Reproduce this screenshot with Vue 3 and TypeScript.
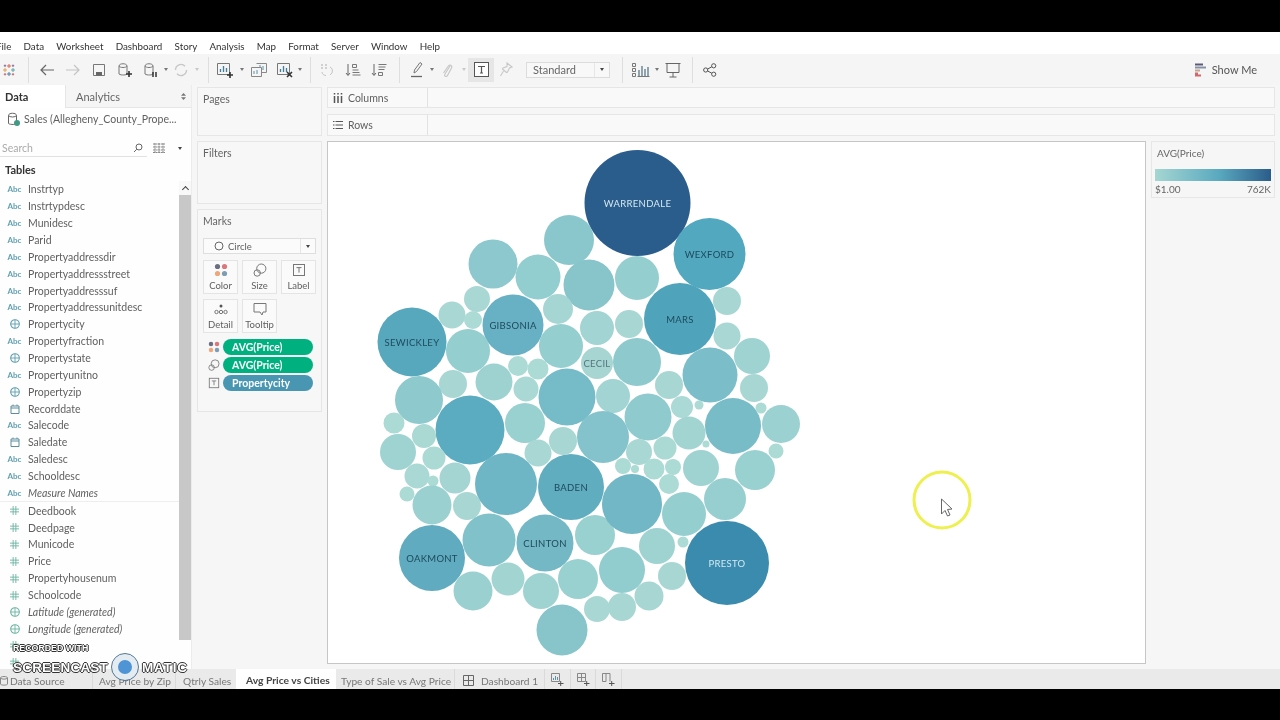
<script setup lang="ts">
type FieldKind = 'abc' | 'globe' | 'date' | 'num'

interface Field {
  name: string
  kind: FieldKind
  italic?: boolean
  measure?: boolean
}

interface Bubble {
  x: number
  y: number
  r: number
  color?: string
  label?: string
  ink?: string
}

const menus = ['File', 'Data', 'Worksheet', 'Dashboard', 'Story', 'Analysis', 'Map', 'Format', 'Server', 'Window', 'Help']

const dimensions: Field[] = [
  { name: 'Instrtyp', kind: 'abc' },
  { name: 'Instrtypdesc', kind: 'abc' },
  { name: 'Munidesc', kind: 'abc' },
  { name: 'Parid', kind: 'abc' },
  { name: 'Propertyaddressdir', kind: 'abc' },
  { name: 'Propertyaddressstreet', kind: 'abc' },
  { name: 'Propertyaddresssuf', kind: 'abc' },
  { name: 'Propertyaddressunitdesc', kind: 'abc' },
  { name: 'Propertycity', kind: 'globe' },
  { name: 'Propertyfraction', kind: 'abc' },
  { name: 'Propertystate', kind: 'globe' },
  { name: 'Propertyunitno', kind: 'abc' },
  { name: 'Propertyzip', kind: 'globe' },
  { name: 'Recorddate', kind: 'date' },
  { name: 'Salecode', kind: 'abc' },
  { name: 'Saledate', kind: 'date' },
  { name: 'Saledesc', kind: 'abc' },
  { name: 'Schooldesc', kind: 'abc' },
  { name: 'Measure Names', kind: 'abc', italic: true },
]

const measures: Field[] = [
  { name: 'Deedbook', kind: 'num', measure: true },
  { name: 'Deedpage', kind: 'num', measure: true },
  { name: 'Municode', kind: 'num', measure: true },
  { name: 'Price', kind: 'num', measure: true },
  { name: 'Propertyhousenum', kind: 'num', measure: true },
  { name: 'Schoolcode', kind: 'num', measure: true },
  { name: 'Latitude (generated)', kind: 'globe', italic: true, measure: true },
  { name: 'Longitude (generated)', kind: 'globe', italic: true, measure: true },
  { name: '', kind: 'num', measure: true },
  { name: '', kind: 'num', measure: true },
]

const DARK_INK = '#1d4a5c'
const LIGHT_INK = '#d4e9f0'

const bubbles: Bubble[] = [
  { x: 637.5, y: 203, r: 53, color: '#2b5d8c', label: 'WARRENDALE', ink: LIGHT_INK },
  { x: 709.5, y: 254, r: 36, color: '#52a8bf', label: 'WEXFORD', ink: DARK_INK },
  { x: 680, y: 319, r: 36, color: '#4fa4bb', label: 'MARS', ink: DARK_INK },
  { x: 412, y: 342, r: 34.5, color: '#58a8bd', label: 'SEWICKLEY', ink: DARK_INK },
  { x: 513, y: 325, r: 30.5, color: '#68b0c3', label: 'GIBSONIA', ink: DARK_INK },
  { x: 597, y: 363, r: 16, color: '#a6d5d2', label: 'CECIL', ink: '#54777f' },
  { x: 571, y: 487, r: 33, color: '#60adc0', label: 'BADEN', ink: DARK_INK },
  { x: 545, y: 543, r: 28.5, color: '#74b8c6', label: 'CLINTON', ink: DARK_INK },
  { x: 432, y: 558, r: 33, color: '#60abbf', label: 'OAKMONT', ink: DARK_INK },
  { x: 727, y: 563, r: 42, color: '#3a8bae', label: 'PRESTO', ink: LIGHT_INK },
  { x: 569, y: 240, r: 25 },
  { x: 493, y: 264, r: 24.5 },
  { x: 538, y: 277, r: 22.5 },
  { x: 589, y: 285, r: 25.5 },
  { x: 637, y: 278, r: 22 },
  { x: 727, y: 301, r: 14 },
  { x: 477, y: 299, r: 13 },
  { x: 452, y: 315, r: 13.5 },
  { x: 473, y: 320, r: 9 },
  { x: 558, y: 309, r: 15 },
  { x: 597, y: 328, r: 17 },
  { x: 629, y: 324, r: 14 },
  { x: 727, y: 336, r: 13.5 },
  { x: 752, y: 356, r: 18 },
  { x: 468, y: 351, r: 22 },
  { x: 561, y: 346, r: 22 },
  { x: 637, y: 362, r: 24 },
  { x: 710, y: 375, r: 27.5 },
  { x: 518, y: 366, r: 10 },
  { x: 538, y: 369, r: 10.5 },
  { x: 453, y: 384, r: 14 },
  { x: 494, y: 382, r: 18.5 },
  { x: 669, y: 385, r: 14 },
  { x: 754, y: 388, r: 14 },
  { x: 526, y: 389, r: 12.5 },
  { x: 419, y: 400, r: 24 },
  { x: 567, y: 397, r: 28.5 },
  { x: 613, y: 396, r: 17 },
  { x: 470, y: 430, r: 34.5 },
  { x: 394, y: 423, r: 10.5 },
  { x: 424, y: 436, r: 12 },
  { x: 398, y: 452, r: 18 },
  { x: 525, y: 423, r: 20 },
  { x: 563, y: 441, r: 14 },
  { x: 538, y: 453, r: 13.5 },
  { x: 434, y: 458, r: 11.5 },
  { x: 417, y: 476, r: 12.5 },
  { x: 433, y: 481, r: 5.5 },
  { x: 455, y: 478, r: 15.5 },
  { x: 407, y: 494, r: 7.5 },
  { x: 432, y: 505, r: 19.5 },
  { x: 467, y: 506, r: 14 },
  { x: 506, y: 484, r: 31 },
  { x: 489, y: 540, r: 26.5 },
  { x: 508, y: 579, r: 16.5 },
  { x: 473, y: 591, r: 19.5 },
  { x: 541, y: 591, r: 18 },
  { x: 578, y: 579, r: 20 },
  { x: 562, y: 630, r: 25.5 },
  { x: 595, y: 535, r: 20 },
  { x: 597, y: 609, r: 13 },
  { x: 648, y: 417, r: 23.5 },
  { x: 682, y: 407, r: 11 },
  { x: 699, y: 405, r: 4.5 },
  { x: 733, y: 426, r: 28 },
  { x: 781, y: 424, r: 19 },
  { x: 761, y: 408, r: 5.5 },
  { x: 603, y: 437, r: 26 },
  { x: 689, y: 433, r: 16.5 },
  { x: 639, y: 452, r: 13 },
  { x: 665, y: 448, r: 11.5 },
  { x: 706, y: 444, r: 3.5 },
  { x: 776, y: 451, r: 7.5 },
  { x: 623, y: 466, r: 8 },
  { x: 635, y: 469, r: 4 },
  { x: 654, y: 469, r: 10.5 },
  { x: 673, y: 467, r: 8 },
  { x: 701, y: 468, r: 18 },
  { x: 755, y: 470, r: 20 },
  { x: 669, y: 484, r: 10 },
  { x: 632, y: 504, r: 30 },
  { x: 684, y: 514, r: 22 },
  { x: 725, y: 499, r: 21 },
  { x: 657, y: 546, r: 18 },
  { x: 683, y: 542, r: 5.5 },
  { x: 672, y: 576, r: 14 },
  { x: 622, y: 570, r: 23 },
  { x: 649, y: 596, r: 14.5 },
  { x: 622, y: 607, r: 14 },
]

// the sizes and colours both encode AVG(Price), so unlabelled marks get their fill from r
const ramp: [number, number[]][] = [
  [10, [172, 218, 213]],
  [14, [168, 215, 211]],
  [22, [148, 206, 207]],
  [25, [138, 199, 204]],
  [28, [120, 188, 200]],
  [31, [110, 181, 197]],
  [35, [88, 171, 191]],
]

function fillFor(b: Bubble): string {
  if (b.color) return b.color
  const r = Math.min(35, Math.max(10, b.r))
  let i = 0
  while (i < ramp.length - 2 && r > ramp[i + 1][0]) i++
  const [r0, c0] = ramp[i]
  const [r1, c1] = ramp[i + 1]
  const t = (r - r0) / (r1 - r0)
  const mix = c0.map((c, n) => Math.round(c + (c1[n] - c) * t))
  return `rgb(${mix.join(',')})`
}
</script>

<template>
  <div class="frame">
    <svg class="sprites" width="0" height="0" aria-hidden="true">
      <symbol id="i-color" viewBox="0 0 14 14">
        <circle cx="3.5" cy="3.5" r="2.6" fill="#6a6f80" />
        <circle cx="10.5" cy="3.5" r="2.6" fill="#d9777a" />
        <circle cx="3.5" cy="10.5" r="2.6" fill="#efa67c" />
        <circle cx="10.5" cy="10.5" r="2.6" fill="#7d9db4" />
      </symbol>
      <symbol id="i-size" viewBox="0 0 14 14">
        <circle cx="8.3" cy="5.6" r="4.6" fill="none" stroke="#777" />
        <circle cx="4.2" cy="10" r="3.2" fill="none" stroke="#777" />
      </symbol>
      <symbol id="i-label" viewBox="0 0 14 14">
        <rect x="1.5" y="1.5" width="11" height="11" fill="none" stroke="#777" />
        <path d="M4.5 4.6h5M7 4.6v5" fill="none" stroke="#777" />
      </symbol>
    </svg>

    <div class="black-bar top"></div>

    <nav class="menu">
      <span v-for="m in menus" :key="m">{{ m }}</span>
    </nav>

    <div class="toolbar">
      <svg class="logo" width="14" height="14" viewBox="0 0 14 14">
        <path d="M7 1v4M5 3h4" stroke="#d9694f" />
        <path d="M7 9v4M5 11h4" stroke="#4f7fa6" />
        <path d="M3 5v4M1 7h4" stroke="#e3a04f" />
        <path d="M11 5v4M9 7h4" stroke="#5aa7a0" />
        <path d="M3 1.5v2.5M1.8 2.7h2.4M11 1.5v2.5M9.8 2.7h2.4" stroke="#8a6fa0" />
        <path d="M3 10v2.5M1.8 11.3h2.4M11 10v2.5M9.8 11.3h2.4" stroke="#c66a7a" />
      </svg>

      <div class="group g1">
        <span class="tool">
          <svg width="16" height="14" viewBox="0 0 16 14"><path d="M15 7H2M7 2 2 7l5 5" fill="none" stroke="#666" stroke-width="1.2" /></svg>
        </span>
        <span class="tool">
          <svg width="16" height="14" viewBox="0 0 16 14"><path d="M1 7h13M9 2l5 5-5 5" fill="none" stroke="#c4c4c4" stroke-width="1.2" /></svg>
        </span>
        <span class="tool">
          <svg width="14" height="14" viewBox="0 0 14 14"><path d="M1.5 1.5h11v11h-11z" fill="none" stroke="#777" /><path d="M4 9h6v3.5H4z" fill="#666" /></svg>
        </span>
        <span class="tool">
          <svg width="16" height="16" viewBox="0 0 16 16"><path d="M2 4c0-3 8-3 8 0v8c0 1-6 1.6-8 0zM2 4c1 2 7 2 8 0" fill="none" stroke="#777" /><path d="M9 12h6M12 9v6" stroke="#333" stroke-width="1.6" /></svg>
        </span>
        <span class="tool">
          <svg width="16" height="16" viewBox="0 0 16 16"><path d="M2 4c0-3 8-3 8 0v8c0 1-6 1.6-8 0zM2 4c1 2 7 2 8 0" fill="none" stroke="#777" /><path d="M10 10v5M13 10v5" stroke="#333" stroke-width="1.5" /></svg>
        </span>
        <i class="caret c4"></i>
        <span class="tool">
          <svg width="16" height="16" viewBox="0 0 16 16"><path d="M2.5 8a5.5 5.5 0 0 1 9.5-3.8M13.5 8A5.5 5.5 0 0 1 4 11.8" fill="none" stroke="#c6c6c6" stroke-width="1.3" /></svg>
        </span>
        <i class="caret c6 off"></i>
      </div>

      <div class="group g2">
        <span class="tool">
          <svg width="18" height="16" viewBox="0 0 18 16"><path d="M1.5 1.5h12v11h-12z" fill="none" stroke="#777" /><path d="M4.5 10V7M7.5 10V4M10.5 10V6" stroke="#3f7f98" stroke-width="1.3" /><path d="M11 13h6M14 10v6" stroke="#333" stroke-width="1.6" /></svg>
        </span>
        <i class="caret c8"></i>
        <span class="tool">
          <svg width="18" height="16" viewBox="0 0 18 16"><path d="M1.5 5.5h10v9h-10z" fill="none" stroke="#888" /><path d="M6.5 1.5h10v9h-5" fill="none" stroke="#888" /><path d="M4 12V9M7 12V8M10 5V3M13 8V4" stroke="#5b93a8" /></svg>
        </span>
        <span class="tool">
          <svg width="18" height="16" viewBox="0 0 18 16"><path d="M1.5 1.5h12v11h-12z" fill="none" stroke="#777" /><path d="M4.5 10V7M7.5 10V4M10.5 10V6" stroke="#3f7f98" stroke-width="1.3" /><path d="m11 10 5 5M16 10l-5 5" stroke="#333" stroke-width="1.6" /></svg>
        </span>
        <i class="caret c2"></i>
      </div>

      <div class="group g3">
        <span class="tool">
          <svg width="16" height="16" viewBox="0 0 16 16"><path d="M2 3h2M6 3h2M2 6h2M6 6h2" stroke="#c4c4c4" stroke-width="1.4" /><path d="M11 5c2 1 3 3 2 6l-2 2M3 10c0 2 2 3.5 4 3.5" fill="none" stroke="#c4c4c4" /></svg>
        </span>
        <span class="tool">
          <svg width="16" height="16" viewBox="0 0 16 16"><path d="M3 2v11M1 11l2 2.5L5 11" fill="none" stroke="#666" /><path d="M7.5 2.5h4v3h-4zM7.5 8h6M7.5 10.5h7M7.5 13h8" fill="none" stroke="#777" /></svg>
        </span>
        <span class="tool">
          <svg width="16" height="16" viewBox="0 0 16 16"><path d="M3 2v11M1 11l2 2.5L5 11" fill="none" stroke="#666" /><path d="M7.5 2.5h8M7.5 5h7M7.5 7.5h6M7.5 10.5h4v3h-4z" fill="none" stroke="#777" /></svg>
        </span>
      </div>

      <div class="group g4">
        <span class="tool">
          <svg width="14" height="17" viewBox="0 0 14 17"><path d="m4 12 .5-3L10 1.5l2 1.5-5.5 7.5z" fill="none" stroke="#777" /><path d="M1 15.5h11" stroke="#666" stroke-width="1.3" /></svg>
        </span>
        <i class="caret c4"></i>
        <span class="tool">
          <svg width="12" height="16" viewBox="0 0 12 16"><path d="M9 4 4 12c-1.5 2 1.5 3.5 2.5 1.5L10.5 6c1-2.5-2-4-3.5-1.5L2.5 11" fill="none" stroke="#c8c8c8" stroke-width="1.2" /></svg>
        </span>
        <i class="caret c8 off"></i>
        <span class="tool active">
          <svg width="15" height="15" viewBox="0 0 15 15"><rect x=".5" y=".5" width="14" height="14" fill="#fdfdfd" stroke="#555" /><path d="M4 4.5h7M7.5 4.5V11M6 11h3" fill="none" stroke="#555" stroke-width="1.2" /></svg>
        </span>
        <span class="tool narrow">
          <svg width="14" height="16" viewBox="0 0 14 16"><path d="m8 1 5 4-2.5 1-2 4-1 .5-4-3.5.5-1 4-1.5zM4.500 9 1.500 14" fill="none" stroke="#c8c8c8" stroke-width="1.1" /></svg>
        </span>
        <div class="fit-select">
          <span>Standard</span>
          <b><i class="caret c4 dark"></i></b>
        </div>
      </div>

      <div class="group g5">
        <span class="tool">
          <svg width="18" height="14" viewBox="0 0 18 14"><path d="M.5.5h3v3h-3zM.5 5.5h3v3h-3zM.5 10.5h3v3h-3z" fill="none" stroke="#777" /><path d="M5.5 13.5h12" stroke="#777" /><path d="M7 13V7M10 13V3M13 13V6M16 13V4" stroke="#4d6e80" stroke-width="1.2" /></svg>
        </span>
        <i class="caret c6"></i>
        <span class="tool">
          <svg width="16" height="16" viewBox="0 0 16 16"><path d="M.5 1.5h15M2 1.5v9h12v-9" fill="none" stroke="#666" /><path d="M8 10.5V15M4.500 15h7" stroke="#666" /></svg>
        </span>
      </div>

      <span class="tool share">
        <svg width="14" height="14" viewBox="0 0 14 14"><circle cx="2.7" cy="7" r="2.1" fill="none" stroke="#555" /><circle cx="10.7" cy="2.8" r="2.1" fill="none" stroke="#555" /><circle cx="10.7" cy="11.2" r="2.1" fill="none" stroke="#555" /><path d="m4.600 6 4.200-2.200M4.600 8l4.200 2.200" stroke="#555" /></svg>
      </span>

      <div class="show-me">
        <svg width="11" height="14" viewBox="0 0 11 14">
          <path d="M0 1.5h8" stroke="#5d5a78" stroke-width="2" />
          <path d="M0 4.5h11" stroke="#8792a6" stroke-width="2" />
          <path d="M0 7.5h5" stroke="#c9a48c" stroke-width="2" />
          <path d="M0 10.500h3M0 12.500h6" stroke="#d3686a" stroke-width="2" />
        </svg>
        <span>Show Me</span>
      </div>
    </div>

    <div class="workspace">
      <aside class="sidebar">
        <div class="side-tabs">
          <span class="side-tab on">Data</span>
          <span class="side-tab">Analytics<i class="updown"></i></span>
        </div>
        <div class="source">
          <svg width="14" height="15" viewBox="0 0 14 15"><path d="M1.5 3.5c0-3 8-3 8 0v8c0 1-6 1.5-8 0zM1.5 3.5c1 2 7 2 8 0" fill="none" stroke="#666" /><circle cx="10" cy="11" r="3" fill="#3f9a86" /></svg>
          <span>Sales (Allegheny_County_Prope...</span>
        </div>
        <div class="search-row">
          <div class="search">
            <span>Search</span>
            <svg width="10" height="10" viewBox="0 0 10 10"><circle cx="6" cy="4" r="3" fill="none" stroke="#666" /><path d="M3.8 6.2 1 9" stroke="#666" /></svg>
          </div>
          <svg class="view-icon" width="12" height="10" viewBox="0 0 12 10"><path d="M0 1h12M0 4h12M0 7h12M0 9.500h12M2 0v10M6 0v10M10 0v10" stroke="#888" stroke-dasharray="2 .6" /></svg>
          <i class="caret c4 dark menu-caret"></i>
        </div>
        <h4 class="tables">Tables</h4>
        <div class="field-area">
          <div class="fields">
            <div
              v-for="f in [...dimensions, ...measures]"
              :key="f.name + f.kind + f.measure"
              class="field"
              :class="{ italic: f.italic, first: f.name === 'Deedbook' }"
            >
              <span class="field-icon" :class="{ green: f.measure }">
                <template v-if="f.kind === 'abc'">Abc</template>
                <svg v-else-if="f.kind === 'globe'" width="10" height="10" viewBox="0 0 10 10">
                  <circle cx="5" cy="5" r="4.3" fill="none" stroke="currentColor" stroke-width="1.1" />
                  <path d="M.7 5h8.6M5 .7v8.6" stroke="currentColor" stroke-width=".9" />
                </svg>
                <svg v-else-if="f.kind === 'date'" width="10" height="10" viewBox="0 0 10 10">
                  <path d="M1 2h8v7.5H1zM1 4h8M3 .5V2M7 .5V2" fill="none" stroke="#5d8d9c" />
                </svg>
                <svg v-else width="9" height="9" viewBox="0 0 10 10">
                  <path d="M3.5 0v10M6.5 0v10M0 3.5h10M0 6.5h10" stroke="currentColor" />
                </svg>
              </span>
              <span>{{ f.name }}</span>
            </div>
          </div>
          <div class="scrollbar">
            <div class="scroll-up"><i class="chev"></i></div>
            <div class="scroll-thumb"></div>
          </div>
        </div>
      </aside>

      <section class="cards">
        <div class="card pages"><h5>Pages</h5></div>
        <div class="card filters"><h5>Filters</h5></div>
        <div class="card marks">
          <h5>Marks</h5>
          <div class="mark-type">
            <svg width="10" height="10" viewBox="0 0 10 10"><circle cx="5" cy="5" r="4" fill="none" stroke="#666" /></svg>
            <span>Circle</span>
            <b><i class="caret c4 dark"></i></b>
          </div>
          <div class="mark-grid">
            <div class="mark-btn"><svg width="14" height="14"><use href="#i-color" /></svg><span>Color</span></div>
            <div class="mark-btn"><svg width="14" height="14"><use href="#i-size" /></svg><span>Size</span></div>
            <div class="mark-btn"><svg width="14" height="14"><use href="#i-label" /></svg><span>Label</span></div>
            <div class="mark-btn">
              <svg width="14" height="14" viewBox="0 0 14 14"><circle cx="7" cy="4" r="1.5" fill="#555" /><circle cx="2.5" cy="10" r="1.7" fill="none" stroke="#777" /><circle cx="7" cy="10" r="1.7" fill="none" stroke="#777" /><circle cx="11.5" cy="10" r="1.7" fill="none" stroke="#777" /></svg>
              <span>Detail</span>
            </div>
            <div class="mark-btn">
              <svg width="14" height="14" viewBox="0 0 14 14"><path d="M1 1.5h12V10h-3l-1 3-2-3H1z" fill="none" stroke="#777" /></svg>
              <span>Tooltip</span>
            </div>
          </div>
          <div class="pill-row"><svg width="12" height="12"><use href="#i-color" /></svg><span class="pill">AVG(Price)</span></div>
          <div class="pill-row"><svg width="12" height="12"><use href="#i-size" /></svg><span class="pill">AVG(Price)</span></div>
          <div class="pill-row"><svg width="12" height="12"><use href="#i-label" /></svg><span class="pill blue">Propertycity</span></div>
        </div>
      </section>

      <section class="canvas-col">
        <div class="shelf columns">
          <div class="shelf-name">
            <svg width="10" height="10" viewBox="0 0 10 10"><path d="M1.5 3v7M5 3v7M8.5 3v7M1.5 0v1.5M5 0v1.5M8.500 0v1.5" stroke="#555" stroke-width="1.5" /></svg>
            Columns
          </div>
        </div>
        <div class="shelf rows">
          <div class="shelf-name">
            <svg width="10" height="10" viewBox="0 0 10 10"><path d="M2.5 1.5H10M2.5 5H10M2.5 8.5H10M0 1.5h1.500M0 5h1.500M0 8.500h1.500" stroke="#555" /></svg>
            Rows
          </div>
        </div>
        <div class="view-row">
          <div class="viz">
            <svg class="chart" viewBox="328 142 817 521" width="817" height="521">
              <g v-for="b in bubbles" :key="`${b.x}-${b.y}`">
                <circle :cx="b.x" :cy="b.y" :r="b.r" :fill="fillFor(b)" />
                <text v-if="b.label" :x="b.x" :y="b.y + 3.5" :fill="b.ink" text-anchor="middle">{{ b.label }}</text>
              </g>
              <circle class="halo" cx="942" cy="500" r="28" />
              <path class="pointer" d="M941.5 499v15l3.5-3.5 2.5 5.5 2.5-1-2.5-5.5 4.5-.5z" />
            </svg>
          </div>
          <div class="legend">
            <h5>AVG(Price)</h5>
            <div class="ramp"></div>
            <div class="legend-ends"><span>$1.00</span><span>762K</span></div>
          </div>
        </div>
      </section>
    </div>

    <div class="sheet-tabs">
      <span class="sheet source-tab">
        <svg width="9" height="10" viewBox="0 0 9 10"><path d="M.5 2c0-2 7-2 7 0v6c0 1.5-7 1.5-7 0zM.5 2c1 1.5 6 1.5 7 0" fill="none" stroke="#888" /></svg>
        Data Source
      </span>
      <span class="sheet zip">Avg Price by Zip</span>
      <span class="sheet qtr">Qtrly Sales</span>
      <span class="sheet current">Avg Price vs Cities</span>
      <span class="sheet type">Type of Sale vs Avg Price</span>
      <span class="sheet dash">
        <svg width="11" height="11" viewBox="0 0 11 11"><path d="M.5.5h10v10H.5zM.5 5.5h10M5.5.5v10" fill="none" stroke="#666" /></svg>
        Dashboard 1
      </span>
      <span class="sheet add">
        <svg width="14" height="14" viewBox="0 0 14 14"><path d="M1.5 1.5h8v8h-8z" fill="none" stroke="#888" /><path d="M3.5 8V6M5.5 8V4M7.5 8V5" stroke="#5b93a8" /><path d="M8 11.5h5.500M10.700 9v5" stroke="#555" /></svg>
      </span>
      <span class="sheet add">
        <svg width="14" height="14" viewBox="0 0 14 14"><path d="M1.5 1.5h8v8h-8zM1.5 5.5h8M5.5 1.5v8" fill="none" stroke="#888" /><path d="M8 11.5h5.500M10.700 9v5" stroke="#555" /></svg>
      </span>
      <span class="sheet add">
        <svg width="14" height="14" viewBox="0 0 14 14"><path d="M1.5 1.5H5v8H1.500zM5 1.5h4v8" fill="none" stroke="#888" /><path d="M8 11.5h5.500M10.700 9v5" stroke="#555" /></svg>
      </span>
    </div>

    <div class="black-bar bottom"></div>

    <div class="watermark">
      <div class="wm-top">RECORDED WITH</div>
      <div class="wm-main">
        <span class="wm-screen">SCREENCAST</span>
        <i class="wm-logo"></i>
        <span class="wm-matic">MATIC</span>
      </div>
    </div>
  </div>
</template>

<style>
html,
body {
  margin: 0;
  background: #000;
}
</style>

<style scoped>
.frame {
  position: relative;
  width: 1280px;
  height: 720px;
  overflow: hidden;
  display: flex;
  flex-direction: column;
  background: #f6f6f6;
  color: #5f5f5f;
  font-family: Lato, "Open Sans", sans-serif;
  font-size: 10.5px;
  filter: blur(0.5px);
}

.sprites {
  position: absolute;
}

.black-bar {
  background: #000;
  flex: none;
}

.black-bar.top {
  height: 32px;
}

.black-bar.bottom {
  height: 31px;
}

.menu {
  height: 22px;
  flex: none;
  display: flex;
  align-items: center;
  gap: 12.2px;
  margin-left: -4px;
  padding-top: 6px;
  box-sizing: border-box;
  background: #fff;
  color: #333;
  font-size: 9.8px;
}

.toolbar {
  height: 31px;
  flex: none;
  display: flex;
  align-items: center;
  background: #f5f5f5;
}

.logo {
  width: 14px;
  flex: none;
  margin: 0 12px 0 2px;
}

.group {
  display: flex;
  align-items: center;
  height: 26px;
  border-right: 1px solid #dedede;
}

.g1 { padding: 0 8px 0 5px; border-left: 1px solid #dedede; }
.g2 { padding: 0 10px 0 3px; }
.g3 { padding: 0 7px 0 3px; }
.g4 { padding: 0 12px 0 4px; }
.g5 { padding: 0 6px 0 5px; }

.tool {
  width: 26px;
  height: 24px;
  flex: none;
  display: flex;
  align-items: center;
  justify-content: center;
}

.tool.narrow {
  width: 24px;
}

.tool.active {
  background: #e6e6e6;
}

.tool.share {
  margin-left: 4px;
}

.caret {
  display: block;
  flex: none;
  height: 0;
  border-top: 3px solid #777;
  border-left: 2px solid transparent;
  border-right: 2px solid transparent;
  box-sizing: border-box;
}

.caret.off { border-top-color: #c8c8c8; }
.caret.dark { border-top-color: #444; }
.c2 { width: 4px; margin-right: -2px; }
.c4 { width: 4px; }
.c6 { width: 4px; margin: 0 1px; }
.c8 { width: 4px; margin: 0 2px; }

.fit-select {
  width: 84px;
  height: 16px;
  margin-left: 8px;
  display: flex;
  align-items: center;
  justify-content: space-between;
  border: 1px solid #dcdcdc;
  box-sizing: border-box;
  background: #f8f8f8;
  padding-left: 6px;
  color: #666;
  font-size: 11px;
}

.fit-select b {
  width: 14px;
  height: 100%;
  display: flex;
  align-items: center;
  justify-content: center;
  border-left: 1px solid #e6e6e6;
}

.show-me {
  margin-left: auto;
  padding-right: 23px;
  display: flex;
  align-items: center;
  gap: 6px;
  color: #555;
  font-size: 11px;
}

.workspace {
  flex: 1;
  min-height: 0;
  display: flex;
}

.sidebar {
  width: 191px;
  flex: none;
  display: flex;
  flex-direction: column;
  background: #fefefe;
  border-right: 1px solid #ececec;
  box-sizing: content-box;
}

.side-tabs {
  height: 23px;
  flex: none;
  display: flex;
}

.side-tab {
  flex: 1;
  display: flex;
  align-items: center;
  position: relative;
  padding-left: 10px;
  background: #f5f5f5;
  border-bottom: 1px solid #e6e6e6;
  font-size: 11px;
  color: #666;
}

.side-tab.on {
  flex: 0 0 66px;
  padding-left: 5px;
  background: #fff;
  border-bottom: 0;
  border-right: 1px solid #e6e6e6;
  box-sizing: border-box;
  font-weight: 700;
  color: #333;
}

.updown {
  position: absolute;
  right: 5px;
  top: 8px;
  width: 5px;
  height: 7px;
  background: #777;
  clip-path: polygon(50% 0, 100% 40%, 50% 40%, 50% 60%, 100% 60%, 50% 100%, 0 60%, 50% 60%, 50% 40%, 0 40%);
}

.source {
  height: 22px;
  flex: none;
  display: flex;
  align-items: center;
  gap: 3px;
  padding-left: 7px;
  color: #5f5f5f;
  font-size: 10.5px;
}

.search-row {
  height: 18px;
  margin-top: 9px;
  flex: none;
  display: flex;
  align-items: center;
}

.search {
  width: 147px;
  height: 17px;
  display: flex;
  align-items: center;
  justify-content: space-between;
  padding: 0 4px 0 2px;
  box-sizing: border-box;
  border-bottom: 1px solid #e2e2e2;
  color: #aaa;
}

.view-icon {
  margin-left: 6px;
}

.menu-caret {
  margin-left: 13px;
}

.tables {
  margin: 5px 0 0 5px;
  height: 15px;
  line-height: 15px;
  flex: none;
  font-size: 11px;
  font-weight: 700;
  color: #333;
}

.field-area {
  flex: 1;
  min-height: 0;
  display: flex;
  margin-top: 4px;
}

.fields {
  flex: 1;
  min-width: 0;
  overflow: hidden;
}

.field {
  height: 16.87px;
  display: flex;
  align-items: center;
  white-space: nowrap;
}

.field.italic {
  font-style: italic;
}

.field.first {
  border-top: 1px solid #eee;
}

.field-icon {
  width: 28px;
  flex: none;
  padding-left: 1px;
  box-sizing: border-box;
  display: flex;
  justify-content: center;
  color: #5f9fb0;
  font-size: 8px;
  font-style: normal;
  font-weight: 700;
}

.field-icon.green {
  color: #6ab5a0;
}

.scrollbar {
  width: 12px;
  flex: none;
  display: flex;
  flex-direction: column;
}

.scroll-up {
  height: 14px;
  display: flex;
  align-items: center;
  justify-content: center;
  background: #f8f8f8;
}

.chev {
  width: 4px;
  height: 4px;
  margin-top: 3px;
  border-left: 1.3px solid #444;
  border-top: 1.3px solid #444;
  transform: rotate(45deg);
}

.scroll-thumb {
  height: 445px;
  background: #c8c8c8;
}

.cards {
  width: 125px;
  flex: none;
  margin-left: 5px;
  padding-top: 2px;
  display: flex;
  flex-direction: column;
  gap: 5px;
}

.card {
  border: 1px solid #e6e6e6;
  box-sizing: border-box;
  padding: 5px 5px;
  background: #f7f7f7;
}

h5 {
  margin: 0;
  font-size: 10.5px;
  font-weight: 400;
  color: #666;
  line-height: 13px;
}

.pages { height: 49px; }
.filters { height: 63px; }
.marks { height: 203px; }

.mark-type {
  height: 16px;
  margin-top: 10px;
  display: flex;
  align-items: center;
  border: 1px solid #dedede;
  background: #fbfbfb;
  padding-left: 10px;
  gap: 4px;
  box-sizing: border-box;
  width: 113px;
}

.mark-type span {
  flex: 1;
  font-size: 9.5px;
}

.mark-type b {
  width: 14px;
  height: 100%;
  display: flex;
  align-items: center;
  justify-content: center;
  border-left: 1px solid #e6e6e6;
}

.mark-grid {
  display: grid;
  grid-template-columns: repeat(3, 35px);
  grid-auto-rows: 34px;
  column-gap: 4px;
  row-gap: 5px;
  margin-top: 6px;
  margin-bottom: 5px;
}

.mark-btn {
  display: flex;
  flex-direction: column;
  align-items: center;
  justify-content: center;
  gap: 3px;
  border: 1px solid #e4e4e4;
  box-sizing: border-box;
  background: #fafafa;
  font-size: 9.5px;
}

.pill-row {
  height: 18px;
  display: flex;
  align-items: center;
  gap: 3px;
  padding-left: 5px;
}

.pill {
  width: 90px;
  height: 16px;
  line-height: 16px;
  padding-left: 9px;
  box-sizing: border-box;
  border-radius: 8px;
  background: #00b180;
  color: #fff;
  font-weight: 700;
  font-size: 10.5px;
}

.pill.blue {
  background: #4996b2;
}

.canvas-col {
  flex: 1;
  min-width: 0;
  margin-left: 5px;
  padding: 2px 5px 0 0;
  display: flex;
  flex-direction: column;
}

.shelf {
  height: 22px;
  flex: none;
  display: flex;
  border: 1px solid #e6e6e6;
  box-sizing: border-box;
  background: #f9f9f9;
}

.shelf.columns {
  height: 21px;
}

.shelf.rows {
  margin-top: 6px;
}

.shelf-name {
  width: 100px;
  display: flex;
  align-items: center;
  gap: 5px;
  padding-left: 5px;
  box-sizing: border-box;
  border-right: 1px solid #e2e2e2;
}

.view-row {
  flex: 1;
  min-height: 0;
  margin-top: 5px;
  margin-bottom: 5px;
  display: flex;
  gap: 5px;
}

.viz {
  width: 819px;
  flex: none;
  box-sizing: border-box;
  border: 1px solid #c6c6c6;
  background: #fff;
}

.chart {
  display: block;
}

.chart text {
  font-family: Lato, "Open Sans", sans-serif;
  font-size: 9.5px;
  letter-spacing: 0.3px;
}

.halo {
  fill: none;
  stroke: #edf04f;
  stroke-width: 3px;
}

.pointer {
  fill: #fff;
  stroke: #666;
  stroke-width: 1px;
}

.legend {
  flex: 1;
  height: 57px;
  box-sizing: border-box;
  border: 1px solid #e6e6e6;
  padding: 5px 3px 0;
}

.legend h5 {
  padding-left: 2px;
  font-size: 10px;
}

.ramp {
  height: 12px;
  margin-top: 9px;
  background: linear-gradient(90deg, #a5d6d2, #5aa9bf 55%, #2b5c8a);
}

.legend-ends {
  display: flex;
  justify-content: space-between;
  margin-top: 2px;
  font-size: 10px;
  line-height: 12px;
  color: #666;
}

.sheet-tabs {
  height: 20px;
  flex: none;
  display: flex;
  align-items: stretch;
  background: #eaeaea;
  color: #777;
  font-size: 10.2px;
}

.sheet {
  display: flex;
  align-items: center;
  box-sizing: border-box;
  white-space: nowrap;
  padding-top: 3px;
  border-right: 1px solid #dadada;
}

.source-tab { width: 95px; gap: 1px; margin-left: -2px; padding-left: 2px; }
.zip { width: 83px; padding-left: 6px; }
.qtr { width: 60px; padding-left: 7px; border-right: 0; }
.current {
  width: 100px;
  padding: 2px 0 0 10px;
  background: #fff;
  color: #444;
  font-weight: 700;
  font-size: 10.3px;
  border-right: 0;
}
.type { width: 119px; padding-left: 5px; }
.dash { width: 90px; padding-left: 8px; gap: 7px; }
.add { width: 25.5px; justify-content: center; padding-top: 0; }

.watermark {
  position: absolute;
  left: 13px;
  top: 642px;
  color: #fff;
  font-family: "Liberation Sans", sans-serif;
  font-weight: 700;
  text-shadow: -1px 0 #333, 1px 0 #333, 0 -1px #333, 0 1px #333;
}

.wm-top {
  font-size: 8.8px;
  line-height: 13px;
}

.wm-main {
  display: flex;
  align-items: center;
  gap: 4px;
  font-size: 13.5px;
  margin-top: -1px;
}

.wm-screen {
  letter-spacing: 0.2px;
}

.wm-matic {
  letter-spacing: 0.8px;
}

.wm-logo {
  width: 14px;
  height: 14px;
  border: 6px solid #e4ecf1;
  outline: 1.5px solid #4f7696;
  border-radius: 50%;
  background: #4f94d4;
  flex: none;
}
</style>
